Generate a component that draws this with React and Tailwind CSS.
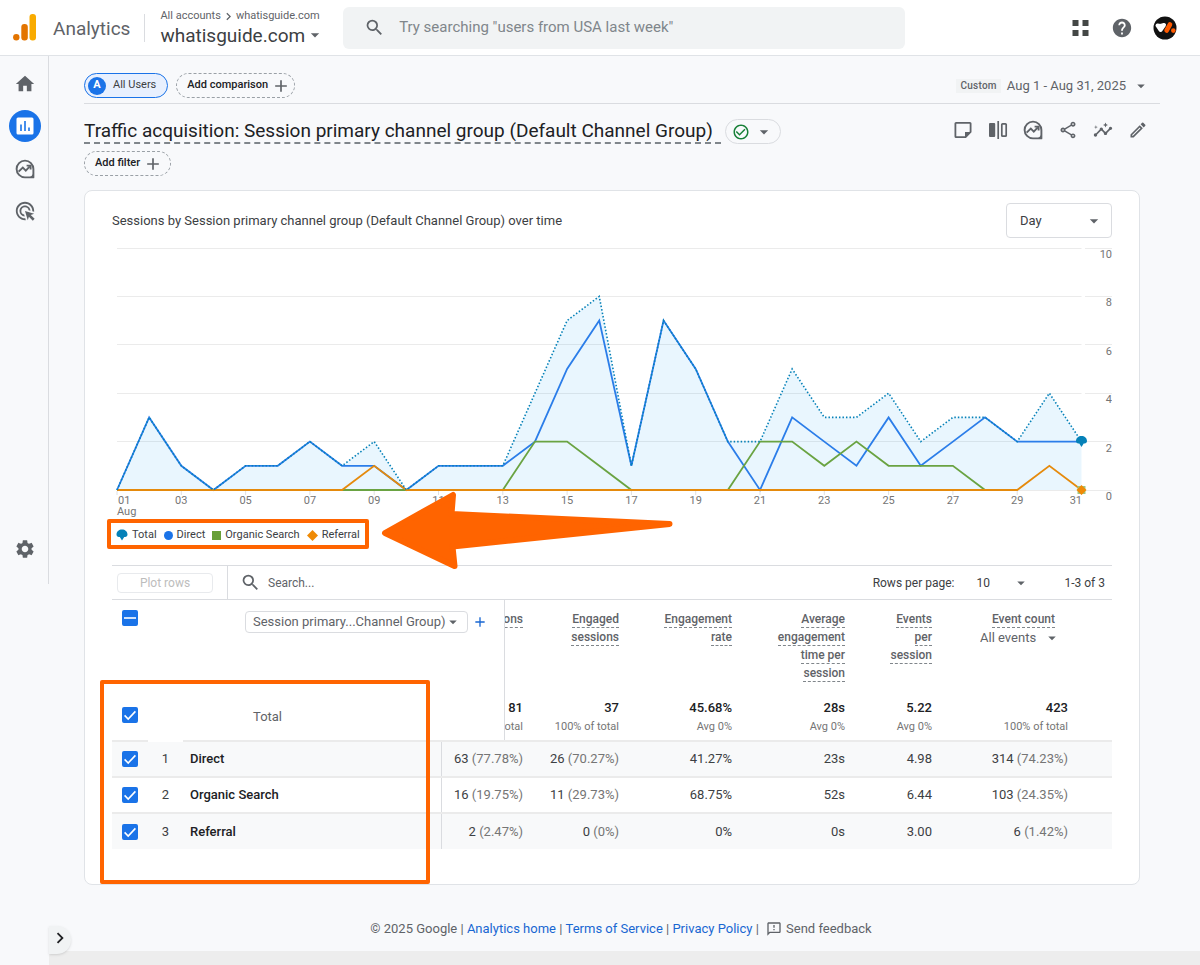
import React, { useState } from 'react';
import {
  MdAdd,
  MdAdsClick,
  MdArrowDropDown,
  MdCheckCircleOutline,
  MdChevronRight,
  MdHelp,
  MdHome,
  MdInsights,
  MdOutlineModeEdit,
  MdOutlineShare,
  MdOutlineSmsFailed,
  MdSearch,
  MdSettings
} from 'react-icons/md';

const TOTAL = [0, 3, 1, 0, 1, 1, 2, 1, 2, 0, 1, 1, 1, 4, 7, 8, 1, 7, 5, 2, 2, 5, 3, 3, 4, 2, 3, 3, 2, 4, 2];
const DIRECT = [0, 3, 1, 0, 1, 1, 2, 1, 1, 0, 1, 1, 1, 2, 5, 7, 1, 7, 5, 2, 0, 3, 2, 1, 3, 1, 2, 3, 2, 2, 2];
const ORGANIC = [0, 0, 0, 0, 0, 0, 0, 0, 0, 0, 0, 0, 0, 2, 2, 1, 0, 0, 0, 0, 2, 2, 1, 2, 1, 1, 1, 0, 0];
const REFERRAL = [0, 0, 0, 0, 0, 0, 0, 0, 1, 0, 0, 0, 0, 0, 0, 0, 0, 0, 0, 0, 0, 0, 0, 0, 0, 0, 0, 0, 0, 1, 0];

const rows = [
  { name: 'Direct', sessions: ['63', '(77.78%)'], engaged: ['26', '(70.27%)'], rate: '41.27%', time: '23s', events: '4.98', count: ['314', '(74.23%)'] },
  { name: 'Organic Search', sessions: ['16', '(19.75%)'], engaged: ['11', '(29.73%)'], rate: '68.75%', time: '52s', events: '6.44', count: ['103', '(24.35%)'] },
  { name: 'Referral', sessions: ['2', '(2.47%)'], engaged: ['0', '(0%)'], rate: '0%', time: '0s', events: '3.00', count: ['6', '(1.42%)'] }
];

// Chart helpers
const px = (i) => 5 + i * 32.15;
const py = (v) => 250 - v * 24.2;
const toPoints = (values) => values.map((v, i) => `${px(i)},${py(v)}`).join(' ');

const ExploreIcon = ({ className }) => (
  <svg viewBox="0 0 20 20" className={className} fill="none" stroke="currentColor" strokeWidth="1.9">
    <path d="M10 1.6a8.4 8.4 0 1 0 0 16.8h8.4V10A8.4 8.4 0 0 0 10 1.6z" strokeLinejoin="round" />
    <path d="M18.8 13v5.8H13c3 -.8 5 -2.8 5.8 -5.8z" fill="currentColor" stroke="none" />
    <path d="M3.6 12.6 7.8 8.6l3 3 4 -4.2" />
    <path d="M11.6 6.6h4v4" />
  </svg>
);

const NoteIcon = ({ className }) => (
  <svg viewBox="0 0 20 20" className={className} fill="none" stroke="currentColor" strokeWidth="1.8">
    <path d="M3 2.9h14a.6.6 0 0 1 .6.6V12l-5 5.100H3a.6.6 0 0 1-.6-.6v-13a.6.6 0 0 1 .6-.6z" />
    <path d="M12 17.500V12h6z" fill="currentColor" stroke="none" />
  </svg>
);

const ColumnsIcon = ({ className }) => (
  <svg viewBox="0 0 20 20" className={className} fill="none" stroke="currentColor" strokeWidth="1.7">
    <rect x="1" y="3" width="6.2" height="14" rx="1" fill="currentColor" stroke="none" />
    <path d="M10.2 1v18" />
    <rect x="13.8" y="3.8" width="4.4" height="12.4" rx="0.8" />
  </svg>
);

const Pin = ({ x, y }) => (
  <path transform={`translate(${x} ${y})`} d="M-5.500 -.5c0-3 2.500-5 5.500-5s5.500 2 5.500 5c0 1.500-1 2.500-2.400 2.500h-.9L0 5.500-2.200 2h-.9C-4.500 2-5.500 1-5.500-.5z" fill="#0581b8" />
);

const Checkbox = ({ label, checked, partial, onChange }) => (
  <span className="relative flex h-4 w-4">
    <input
      type="checkbox"
      aria-label={label}
      checked={checked}
      onChange={onChange}
      className="h-4 w-4 appearance-none rounded-xs border-2 border-gray-500 checked:border-[#1a73e8] checked:bg-[#1a73e8]"
    />
    {checked && (
      <svg viewBox="0 0 16 16" className="pointer-events-none absolute inset-0" fill="none" stroke="#fff" strokeWidth="1.6">
        <path d={partial ? 'M2 8h12' : 'M2.6 8.4 6.2 12 13.4 4.4'} />
      </svg>
    )}
  </span>
);

const SeriesChart = () => (
  <svg viewBox="0 0 1000 278" className="mt-0.5 block w-full" role="img" aria-label="Sessions over time">
    {[0, 2, 4, 6, 8, 10].map((v) => (
      <g key={v}>
        <path d={`M5 ${Math.floor(py(v)) + 0.5}H969.5M973 ${Math.floor(py(v)) + 0.5}H1000`} stroke="#ebebeb" strokeWidth="1" />
        <text x="1000" y={py(v) + 10} textAnchor="end" className="fill-[#757575] text-[11px]">{v}</text>
      </g>
    ))}
    {TOTAL.map((_, i) => i % 2 === 0 && (
      <g key={i}>
        <path d={`M${px(i)} 251v4`} stroke="#e0e0e0" />
        <text
          x={i === 0 ? 6 : i === 30 ? 970 : px(i)}
          y="264"
          textAnchor={i === 0 ? 'start' : i === 30 ? 'end' : 'middle'}
          className="fill-[#757575] text-[11px]"
        >
          {String(i + 1).padStart(2, '0')}
        </text>
      </g>
    ))}
    <text x="5" y="275" className="fill-[#757575] text-[11px]">Aug</text>
    <polygon points={`${px(0)},250 ${toPoints(TOTAL)} ${px(30)},250`} fill="#0a9bf0" fillOpacity="0.09" />
    <polyline points={toPoints(DIRECT)} fill="none" stroke="#2b7de9" strokeWidth="1.8" />
    <polyline points={toPoints(ORGANIC)} fill="none" stroke="#6aa342" strokeWidth="1.8" />
    <polyline points={toPoints(REFERRAL)} fill="none" stroke="#e58a0c" strokeWidth="1.8" />
    <polyline points={toPoints(TOTAL)} fill="none" stroke="#0581b8" strokeWidth="1.6" strokeDasharray="1.5 2" />
    <Pin x={px(30)} y={py(2)} />
    <path d={`M${px(30) - 4} 246h8v8h-8z`} fill="#9cc685" />
    <path d={`M${px(30)} 245l5 5-5 5-5-5z`} fill="#ef8a06" />
  </svg>
);

const Legend = () => (
  <div className="relative -ml-[5px] mt-px flex h-[30px] items-center">
    <ul className="flex items-center gap-[7px] border-4 border-[#ff6400] pt-[5px] pr-[5px] pb-[3px] pl-[5px] text-[11px] leading-[14px] text-[#3c4043] rounded-xs">
      <li className="flex items-center gap-1">
        <svg viewBox="-6 -6 12 12" className="h-3 w-3"><Pin x={0} y={0} /></svg>
        Total
      </li>
      <li className="flex items-center gap-1">
        <span className="h-[9px] w-[9px] rounded-full bg-[#1a73e8]" />
        Direct
      </li>
      <li className="flex items-center gap-1">
        <span className="h-[9px] w-[9px] bg-[#689f38]" />
        Organic Search
      </li>
      <li className="flex items-center gap-1">
        <svg viewBox="0 0 12 12" className="h-[11px] w-[11px]"><path d="M6 0l6 6-6 6-6-6z" fill="#ef8a06" /></svg>
        Referral
      </li>
    </ul>
    <svg viewBox="0 0 292 80" className="pointer-events-none absolute -top-7 left-[274px] h-20 w-[292px]">
      <path d="M4 42 72 4l-1.5 19L288.500 33 71.500 55.500 73.500 75z" fill="#ff6400" stroke="#ff6400" strokeWidth="6" strokeLinejoin="round" />
    </svg>
  </div>
);

const MetricHead = ({ lines }) => (
  <div className="flex flex-col items-end gap-px text-xs leading-4 font-medium whitespace-nowrap">
    {lines.map((line) => (
      <span key={line} className="border-b border-dashed border-[#80868b]">{line}</span>
    ))}
  </div>
);

const TotalCell = ({ value, note }) => (
  <div className="flex flex-col items-end pt-[3px] leading-[19px] whitespace-nowrap">
    <span className="text-[13px] font-medium text-[#202124]">{value}</span>
    <span className="text-[11px] text-[#757575]">{note}</span>
  </div>
);

const ReportTable = () => {
  const [selected, setSelected] = useState([true, true, true]);
  const allSelected = selected.some(Boolean);

  const toggleRow = (index) => setSelected((prev) => prev.map((v, i) => (i === index ? !v : v)));
  const toggleAll = () => setSelected(selected.map(() => !allSelected));

  return (
    <div className="relative">
      <table className="w-full table-fixed border-collapse text-right text-[13px] text-[#3c4043]">
        <colgroup>
          <col className="w-9" />
          <col className="w-[35px]" />
          <col className="w-[258px]" />
          <col className="w-[63px]" />
          <col className="w-[31px]" />
          <col className="w-24" />
          <col className="w-[113px]" />
          <col className="w-[113px]" />
          <col className="w-[87px]" />
          <col className="w-[168px]" />
        </colgroup>
        <thead className="text-[#5f6368]">
          <tr className="h-[90px] align-top">
            <th className="pt-2.5 pl-2.5 text-left"><Checkbox label="Select all rows" checked={allSelected} partial onChange={toggleAll} /></th>
            <td />
            <th colSpan={2} className="pt-[11px] pl-[62px] text-left font-normal">
              <div className="flex items-center gap-1">
                <div className="relative w-[223px]">
                  <select aria-label="Primary dimension" className="block h-[22px] w-full appearance-none rounded-sm border border-[#dadce0] bg-white pl-[7px] text-[13px] leading-5">
                    <option>Session primary...Channel Group)</option>
                  </select>
                  <MdArrowDropDown className="pointer-events-none absolute top-0.5 right-1.5 h-[18px] w-[18px]" />
                </div>
                <button aria-label="Add dimension" className="text-[#1967d2]"><MdAdd className="h-4 w-4" /></button>
              </div>
            </th>
            <th className="overflow-hidden border-l border-[#dadce0] pt-[11px] pr-3">
              <div className="overflow-hidden"><MetricHead lines={['Sessions']} /></div>
            </th>
            <th className="pt-[11px] pr-3"><MetricHead lines={['Engaged', 'sessions']} /></th>
            <th className="pt-[11px] pr-3"><MetricHead lines={['Engagement', 'rate']} /></th>
            <th className="pt-[11px] pr-3"><MetricHead lines={['Average', 'engagement', 'time per', 'session']} /></th>
            <th className="pt-[11px] pr-3"><MetricHead lines={['Events', 'per', 'session']} /></th>
            <th className="pt-[11px] pr-[57px]">
              <MetricHead lines={['Event count']} />
              <div className="relative -mr-1 flex justify-end font-normal">
                <select aria-label="Event" className="appearance-none pr-[22px] leading-5">
                  <option>All events</option>
                </select>
                <MdArrowDropDown className="pointer-events-none absolute -right-0.5 top-px h-[18px] w-[18px]" />
              </div>
            </th>
          </tr>
        </thead>
        <tbody>
          <tr className="h-[51px] border-b-2 border-[#ebebeb]">
            <td className="pl-2.5"><Checkbox label="Plot total" checked onChange={() => {}} /></td>
            <td className="border-b-2 border-white" />
            <td colSpan={2} className="pt-[3px] pl-[70px] text-left text-[#5f6368]">Total</td>
            <td className="overflow-hidden border-l border-[#dadce0] pr-3">
              <div className="overflow-hidden"><TotalCell value="81" note="100% of total" /></div>
            </td>
            <td className="pr-3"><TotalCell value="37" note="100% of total" /></td>
            <td className="pr-3"><TotalCell value="45.68%" note="Avg 0%" /></td>
            <td className="pr-3"><TotalCell value="28s" note="Avg 0%" /></td>
            <td className="pr-3"><TotalCell value="5.22" note="Avg 0%" /></td>
            <td className="pr-11"><TotalCell value="423" note="100% of total" /></td>
          </tr>
          {rows.map((row, index) => (
            <tr key={row.name} className="h-9 border-b-2 border-[#ebebeb] odd:bg-white even:bg-[#f8f9fa] last:border-b-0">
              <td className="pl-2.5"><Checkbox label={`Plot ${row.name}`} checked={selected[index]} onChange={() => toggleRow(index)} /></td>
              <td className="text-center">{index + 1}</td>
              <td className="border-r border-[#dadce0] pl-[7px] text-left font-medium text-[#202124]">{row.name}</td>
              <td colSpan={2} className="pr-3">{row.sessions[0]} <span className="text-[#757575]">{row.sessions[1]}</span></td>
              <td className="pr-3">{row.engaged[0]} <span className="text-[#757575]">{row.engaged[1]}</span></td>
              <td className="pr-3">{row.rate}</td>
              <td className="pr-3">{row.time}</td>
              <td className="pr-3">{row.events}</td>
              <td className="pr-11">{row.count[0]} <span className="text-[#757575]">{row.count[1]}</span></td>
            </tr>
          ))}
        </tbody>
      </table>
      <div className="pointer-events-none absolute top-20 -left-3 h-[204px] w-[330px] rounded-xs border-4 border-[#ff6400]" />
    </div>
  );
};

const Header = () => (
  <header className="flex h-14 items-center border-b border-[#e0e3e7] bg-white">
    <svg viewBox="0 0 24 27" className="ml-[13px] h-[27px] w-6">
      <rect x="16.500" y="0" width="6.500" height="26.500" rx="3" fill="#f9ab00" />
      <rect x="8.300" y="10" width="6.500" height="16.500" rx="3" fill="#e37400" />
      <circle cx="3.300" cy="23.300" r="3.200" fill="#e37400" />
    </svg>
    <span className="ml-4 pt-1 text-[19px] text-[#5f6368]">Analytics</span>
    <div className="ml-3.5 h-7 w-px bg-[#dadce0]" />
    <div className="ml-[15px] flex flex-col">
      <div className="flex items-center text-[11px] leading-[14px] text-[#5f6368]">
        All accounts
        <MdChevronRight className="h-[15px] w-[15px]" />
        whatisguide.com
      </div>
      <button className="flex items-center text-[19px] leading-[23px] text-[#3c4043]">
        whatisguide.com
        <MdArrowDropDown className="h-5 w-5 text-[#5f6368]" />
      </button>
    </div>
    <label className="ml-[18px] flex h-[42px] w-[562px] items-center rounded-md bg-[#f1f3f4] text-[#5f6368]">
      <MdSearch className="ml-[21px] h-[21px] w-[21px]" />
      <input
        type="search"
        aria-label="Search"
        placeholder={'Try searching "users from USA last week"'}
        className="ml-3.5 flex-1 bg-transparent text-[15px] placeholder:text-[#80868b] outline-none"
      />
    </label>
    <div className="mr-[23px] ml-auto flex items-center gap-5 text-[#5f6368]">
      <button aria-label="Apps">
        <svg viewBox="0 0 20 20" className="h-5 w-5" fill="#444746">
          <path d="M1.500 2h6v6h-6zM11.500 2h6v6h-6zM1.500 12h6v6h-6zM11.500 12h6v6h-6z" />
        </svg>
      </button>
      <button aria-label="Help"><MdHelp className="h-[22px] w-[22px]" /></button>
      <button aria-label="Account">
        <svg viewBox="0 0 24 24" className="h-6 w-6">
          <circle cx="12" cy="12" r="11.500" fill="#111" />
          <path d="M4.500 9.500l3 4.500 3.500-5-3.500 1z" fill="#fff" stroke="#fff" strokeWidth="4" strokeLinejoin="round" />
          <path d="M17 8.500l-3.400 6" stroke="#ff5a00" strokeWidth="4.600" strokeLinecap="round" />
          <circle cx="20.300" cy="14.600" r="2.300" fill="#ff5a00" />
        </svg>
      </button>
    </div>
  </header>
);

const Sidebar = () => (
  <aside className="flex w-[49px] shrink-0 flex-col">
    <nav className="flex h-[528px] flex-col items-center border-r border-[#dadce0] pt-[15px] pl-px text-[#5f6368]">
      <a href="#home" aria-label="Home" className="flex h-[26px] items-center"><MdHome className="h-[22px] w-[22px]" /></a>
      <a href="#reports" aria-label="Reports" className="mt-[13px] flex h-8 w-8 items-center justify-center rounded-full bg-[#1a73e8]">
        <svg viewBox="0 0 18 18" className="h-[18px] w-[18px]">
          <rect x="0.500" y="0.500" width="17" height="17" rx="1.500" fill="#fff" />
          <path d="M5 7.500v6.500M9 4v10M13 10.500V14" stroke="#1a73e8" strokeWidth="1.600" />
        </svg>
      </a>
      <a href="#explore" aria-label="Explore" className="mt-[17px]"><ExploreIcon className="h-5 w-5" /></a>
      <a href="#advertising" aria-label="Advertising" className="mt-[21px]"><MdAdsClick className="h-[22px] w-[22px]" /></a>
      <a href="#admin" aria-label="Admin" className="mt-auto mb-6"><MdSettings className="h-[22px] w-[22px]" /></a>
    </nav>
  </aside>
);

const App = () => {
  return (
    <div className="flex min-h-screen flex-col bg-[#f8f9fb] font-[Roboto,sans-serif] text-[#3c4043]">
      <Header />
      <div className="flex flex-1">
        <Sidebar />
        <main className="relative flex min-w-0 flex-1 flex-col">
          <div className="pr-10 pl-[35px]">
            {/* Comparisons and date range */}
            <div className="flex h-12 items-center border-b border-[#dadce0] pt-3">
              <button className="flex h-[25px] items-center gap-[7px] rounded-full border border-[#1a73e8] bg-[#e8f0fe] pr-[11px] pl-[3px] text-[11px]">
                <span className="flex h-[18px] w-[18px] items-center justify-center rounded-full bg-[#1a73e8] text-[11px] font-bold text-white">A</span>
                All Users
              </button>
              <button className="ml-2 flex h-[25px] items-center gap-[3px] rounded-full border border-dashed border-[#9aa0a6] pr-[3px] pl-2.5 text-[11px] font-medium text-[#202124]">
                Add comparison
                <MdAdd className="h-5 w-5 text-[#5f6368]" />
              </button>
              <button className="mr-2.5 ml-auto flex items-center gap-1.5 text-[13px] text-[#5f6368]">
                <span className="bg-[#f1f3f4] px-1 text-[10px] leading-[14px] font-medium tracking-wide">Custom</span>
                Aug 1 - Aug 31, 2025
                <MdArrowDropDown className="h-[18px] w-[18px]" />
              </button>
            </div>
            {/* Title and report actions */}
            <div className="mt-[15px] flex h-[25px] items-center">
              <h1 className="border-b-2 border-dashed border-[#80868b] pr-2 text-[19px] leading-[23px] text-[#202124]">
                Traffic acquisition: Session primary channel group (Default Channel Group)
              </h1>
              <button aria-label="Report status" className="ml-1 flex h-[25px] items-center gap-1 rounded-full border border-[#dadce0] px-1.5">
                <MdCheckCircleOutline className="h-[18px] w-[18px] text-[#188038]" />
                <MdArrowDropDown className="h-5 w-5 text-[#5f6368]" />
              </button>
              <div className="mr-3 mb-1 ml-auto flex items-center gap-[15px] text-[#5f6368]">
                <button aria-label="Notes"><NoteIcon className="h-5 w-5" /></button>
                <button aria-label="Compare"><ColumnsIcon className="h-5 w-5" /></button>
                <button aria-label="Explore"><ExploreIcon className="h-5 w-5" /></button>
                <button aria-label="Share"><MdOutlineShare className="h-5 w-5" /></button>
                <button aria-label="Insights"><MdInsights className="h-5 w-5" /></button>
                <button aria-label="Edit"><MdOutlineModeEdit className="h-5 w-5" /></button>
              </div>
            </div>
            <button className="mt-[7px] flex h-[25px] items-center gap-[3px] rounded-full border border-dashed border-[#9aa0a6] pr-[7px] pl-2.5 text-[11px] font-medium text-[#202124]">
              Add filter
              <MdAdd className="h-5 w-5 text-[#5f6368]" />
            </button>
          </div>

          <section className="mt-3.5 mr-[60px] ml-[35px] rounded-lg border border-[#e0e3e7] bg-white px-[27px] pt-3 pb-[35px]">
            <div className="flex items-center justify-between">
              <h2 className="text-[13px]">Sessions by Session primary channel group (Default Channel Group) over time</h2>
              <div className="relative">
                <select aria-label="Granularity" className="block h-[35px] w-[106px] appearance-none rounded-sm border border-[#dadce0] bg-white pl-[13px] text-[13px]">
                  <option>Day</option>
                </select>
                <MdArrowDropDown className="pointer-events-none absolute top-2 right-2 h-5 w-5 text-[#5f6368]" />
              </div>
            </div>
            <SeriesChart />
            <Legend />
            {/* Table toolbar */}
            <div className="mt-4 flex h-[35px] items-center border-y border-[#dadce0] text-xs">
              <button disabled className="ml-[5px] h-5 w-[96px] rounded-sm border border-[#e8eaed] text-xs text-[#bdbdbd]">Plot rows</button>
              <label className="ml-3.5 flex h-full flex-1 items-center border-l border-[#dadce0] text-[#5f6368]">
                <MdSearch className="ml-3 h-[21px] w-[21px]" />
                <input type="search" aria-label="Search rows" placeholder="Search..." className="ml-[7px] flex-1 text-xs placeholder:text-[#5f6368] outline-none" />
              </label>
              <label htmlFor="rows-per-page">Rows per page:</label>
              <div className="relative ml-[22px]">
                <select id="rows-per-page" className="w-[54px] appearance-none text-xs">
                  <option>10</option>
                </select>
                <MdArrowDropDown className="pointer-events-none absolute -top-px right-0 h-[18px] w-[18px] text-[#5f6368]" />
              </div>
              <span className="mr-[7px] ml-[34px]">1-3 of 3</span>
            </div>
            <ReportTable />
          </section>

          <footer className="mt-8 flex h-6 items-center justify-center pr-[7px] text-[13px] text-[#5f6368]">
            <span>© 2025 Google |&nbsp;</span>
            <a href="#analytics" className="text-[#1967d2]">Analytics home</a>
            <span>&nbsp;|&nbsp;</span>
            <a href="#terms" className="text-[#1967d2]">Terms of Service</a>
            <span>&nbsp;|&nbsp;</span>
            <a href="#privacy" className="text-[#1967d2]">Privacy Policy</a>
            <span>&nbsp;|&nbsp;</span>
            <button className="ml-1 flex items-center gap-1">
              <MdOutlineSmsFailed className="h-4 w-4" />
              Send feedback
            </button>
          </footer>
          <div className="mt-2.5 h-3.5 bg-[#ededed]" />
          <button aria-label="Expand navigation" className="absolute bottom-[11px] left-0 flex h-7 w-[22px] items-center justify-center rounded-r-full bg-[#f1f3f4] pb-1 text-[#202124] shadow-sm">
            <MdChevronRight className="h-[22px] w-[22px]" />
          </button>
        </main>
      </div>
    </div>
  );
};

export default App;
